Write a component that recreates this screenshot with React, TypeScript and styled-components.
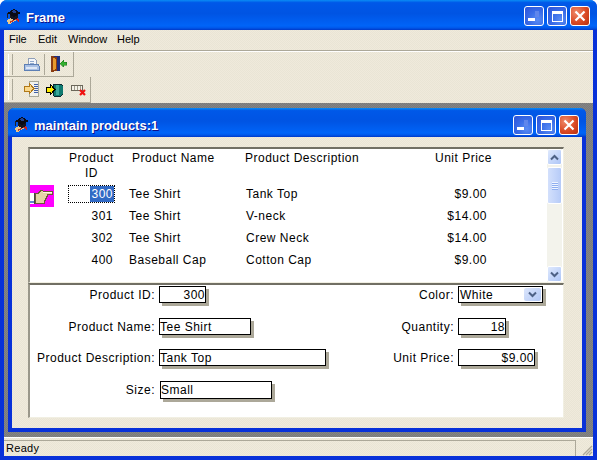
import React from "react";
import styled, { createGlobalStyle } from "styled-components";

const Global = createGlobalStyle`
  html, body { margin: 0; padding: 0; background: #fff; }
  #root { width: 597px; height: 460px; overflow: hidden; }
  * { box-sizing: border-box; }
`;

const TITLE_GRADIENT = "linear-gradient(180deg,#0a8cf5 0,#0058e8 9%,#0054e3 45%,#0064f8 86%,#0058ea 93%,#0038c8 100%)";
const BEIGE_DITHER = "repeating-conic-gradient(#f0eadc 0 25%, #e9e5d5 0 50%) 0 0 / 2px 2px";
const GREY_DITHER = "repeating-conic-gradient(#858585 0 25%, #7a7a7a 0 50%) 0 0 / 2px 2px";

const Frame = styled.div`
  width: 597px;
  height: 460px;
  display: flex;
  flex-direction: column;
  background: #0831d9;
  border-radius: 7px 7px 0 0;
  overflow: hidden;
  font-family: "Liberation Sans", Arial, sans-serif;
  color: #000;
`;

const TitleBar = styled.div<{ $child?: boolean }>`
  flex: none;
  height: ${(p) => (p.$child ? 29 : 30)}px;
  display: flex;
  align-items: center;
  background: ${TITLE_GRADIENT};
  padding: ${(p) => (p.$child ? "4px 7px 0 6px" : "2px 7px 0 6px")};
  gap: 3px;
`;

const TitleText = styled.span`
  flex: 1;
  color: #fff;
  font-size: 13px;
  font-weight: 700;
  margin-top: 2px;
  text-shadow: 1px 1px 0 #0f1089;
  white-space: nowrap;
`;

const Controls = styled.div`
  display: flex;
  gap: 3px;
`;

const WinButton = styled.div<{ $close?: boolean }>`
  width: 20px;
  height: 20px;
  border: 1px solid #fff;
  border-radius: 3px;
  display: flex;
  align-items: center;
  justify-content: center;
  background: ${(p) =>
    p.$close
      ? "radial-gradient(circle at 30% 30%, #ef8a6a 0, #da4a25 55%, #b8300f 100%)"
      : "radial-gradient(circle at 70% 70%, #5a8cf4 0, #3b6ee8 45%, #2a50d8 100%)"};
`;

const Body = styled.div`
  flex: 1;
  margin: 0 4px 4px;
  display: flex;
  flex-direction: column;
  background: ${BEIGE_DITHER};
  min-height: 0;
`;

const MenuBar = styled.div`
  flex: none;
  height: 21px;
  padding-bottom: 2px;
  display: flex;
  align-items: center;
  font-size: 11px;
  border-bottom: 1px solid #aca899;
`;

const MenuItem = styled.span<{ $w: number }>`
  width: ${(p) => p.$w}px;
  padding-left: 5px;
`;

const RuleLight = styled.div`
  flex: none;
  height: 1px;
  background: #fff;
`;

const ToolRow = styled.div<{ $w: number; $h: number }>`
  flex: none;
  width: ${(p) => p.$w}px;
  height: ${(p) => p.$h}px;
  display: flex;
  align-items: center;
  border-right: 1px solid #aca899;
  border-bottom: 1px solid #aca899;
  padding-left: 4px;
`;

const Grip = styled.div`
  flex: none;
  width: 5px;
  height: 21px;
  border-left: 1px solid #fff;
  border-right: 1px solid #aca899;
  margin-right: 10px;
`;

const ToolIcon = styled.div<{ $mr: number }>`
  flex: none;
  width: 17px;
  height: 17px;
  margin-right: ${(p) => p.$mr}px;
  display: flex;
`;

const ToolSep = styled.div`
  flex: none;
  width: 1px;
  height: 21px;
  background: #aca899;
  margin-right: 6px;
`;

const Client = styled.div`
  flex: 1;
  min-height: 0;
  background: ${GREY_DITHER};
  padding: 5px 7px 5px 4px;
  display: flex;
`;

const Child = styled.div`
  flex: 1;
  display: flex;
  flex-direction: column;
  background: #0831d9;
  border-radius: 6px 6px 0 0;
  overflow: hidden;
`;

const ChildBody = styled.div`
  flex: 1;
  margin: 0 4px 4px;
  background: ${BEIGE_DITHER};
  padding: 10px 18px 9px 16px;
  display: flex;
  flex-direction: column;
  min-height: 0;
`;

const Pane = styled.div<{ $h: number }>`
  flex: none;
  height: ${(p) => p.$h}px;
  background: #fff;
  border-style: solid;
  border-width: 2px 1px 1px 2px;
  border-color: #716f64 #f1efe2 #f1efe2 #9a978a;
  display: flex;
  font-size: 12px;
  letter-spacing: 0.5px;
`;

const Grid = styled.div`
  flex: 1;
  display: flex;
  flex-direction: column;
`;

const HeaderRow = styled.div`
  display: grid;
  grid-template-columns: 38px 47px 130px 155px 1fr;
  height: 37px;
  padding-top: 2px;
  line-height: 15px;
`;

const HeadId = styled.div`
  text-align: center;
`;

const HeadCell = styled.div<{ $pl: number }>`
  padding-left: ${(p) => p.$pl}px;
  white-space: nowrap;
`;

const DataRow = styled.div`
  display: grid;
  grid-template-columns: 38px 47px 130px 155px 1fr;
  height: 22px;
  align-items: start;
  line-height: 15px;
`;

const IdCell = styled.div<{ $focus?: boolean }>`
  height: 18px;
  margin-top: -1px;
  padding-right: 1px;
  display: flex;
  align-items: center;
  justify-content: flex-end;
  outline: ${(p) => (p.$focus ? "1px dotted #000" : "none")};
  outline-offset: -1px;
`;

const Selected = styled.span`
  background: #316ac5;
  color: #fff;
  height: 16px;
  line-height: 16px;
  padding: 0 1px;
`;

const Plain = styled.span`
  padding: 0 1px;
`;

const TextCell = styled.div<{ $pl: number }>`
  margin-top: 1px;
  padding-left: ${(p) => p.$pl}px;
  white-space: nowrap;
`;

const PriceCell = styled.div`
  margin-top: 1px;
  width: 87px;
  text-align: right;
`;

const Selector = styled.div<{ $on?: boolean }>`
  width: 24px;
  height: 22px;
  margin-top: -1px;
  background: ${(p) => (p.$on ? "#ff00ff" : "transparent")};
  display: flex;
`;

const Scroll = styled.div`
  flex: none;
  width: 15px;
  margin-right: 1px;
  display: flex;
  flex-direction: column;
  background: #f3f3ec;
`;

const ScrollBtn = styled.div`
  flex: none;
  height: 16px;
  border: 1px solid #fff;
  border-radius: 2px;
  background: linear-gradient(135deg, #dfe9fd, #aec6f7);
  display: flex;
  align-items: center;
  justify-content: center;
`;

const Track = styled.div`
  flex: 1;
  padding-top: 2px;
`;

const Thumb = styled.div`
  height: 37px;
  border: 1px solid #fff;
  border-radius: 2px;
  background: linear-gradient(90deg, #d3e0fc, #b6cbf8);
  display: flex;
  flex-direction: column;
  align-items: center;
  justify-content: center;
  gap: 1px;
`;

const ThumbLine = styled.div`
  width: 6px;
  height: 1px;
  background: #f0f5ff;
  box-shadow: 0 1px 0 #8eaef0;
`;

const FormGrid = styled.div`
  flex: 1;
  display: grid;
  grid-template-columns: 125px 171px 128px 1fr;
  grid-template-rows: 32px 31px 32px 1fr;
  padding-top: 1px;
`;

const Label = styled.div`
  height: 19px;
  line-height: 19px;
  text-align: right;
  white-space: nowrap;
`;

const FieldCell = styled.div<{ $ml?: number }>`
  padding-left: ${(p) => 4 + (p.$ml ?? 0)}px;
`;

const Box = styled.div<{ $w: number; $h?: number; $right?: boolean }>`
  width: ${(p) => p.$w}px;
  height: ${(p) => p.$h ?? 17}px;
  background: #fff;
  border: 1px solid #000;
  box-shadow: 3px 3px 0 #aca899;
  line-height: 15px;
  padding-top: 1px;
  text-align: ${(p) => (p.$right ? "right" : "left")};
  white-space: nowrap;
  overflow: hidden;
`;

const SelectBox = styled(Box)`
  display: flex;
  align-items: center;
  justify-content: space-between;
  padding: 1px 1px 0 1px;
`;

const SelectBtn = styled.div`
  flex: none;
  width: 17px;
  height: 13px;
  margin-top: -1px;
  border-radius: 2px;
  background: linear-gradient(135deg, #dce6fc, #b2c8f5);
  display: flex;
  align-items: center;
  justify-content: center;
`;

const Status = styled.div`
  flex: none;
  height: 19px;
  border-top: 1px solid #fff;
  display: flex;
  font-size: 11px;
  letter-spacing: 0.3px;
`;

const StatusMain = styled.div`
  flex: none;
  width: 572px;
  border-top: 1px solid #aca899;
  border-right: 1px solid #aca899;
  margin-top: 2px;
  padding-left: 2px;
  line-height: 15px;
`;

const StatusGrip = styled.div`
  flex: 1;
  display: flex;
  align-items: flex-end;
  justify-content: flex-end;
`;

const AppIcon = () => (
  <svg width="17" height="17" viewBox="0 0 17 17" shapeRendering="crispEdges">
    <path d="M1 12l8-4 3 3-8 5H2z" fill="#e8c78c" />
    <path d="M3 14l7-4 1 1-7 4z" fill="#c0392b" />
    <path d="M10 10l3 1 0 3-2-1z" fill="#d02020" />
    <path d="M1 5l7-4 7 4-7 4z" fill="#0a0a14" />
    <path d="M4 7v3l4 2 4-2V7l-4 2z" fill="#15151f" />
    <path d="M5 4l3-2 3 2-3 1z" fill="#24408c" />
    <path d="M1 5h1v5H1z" fill="#222" />
  </svg>
);

const MinGlyph = () => (
  <svg width="14" height="14" viewBox="0 0 14 14" shapeRendering="crispEdges">
    <rect x="1" y="9" width="7" height="3" fill="#fff" />
    <rect x="8" y="2" width="4" height="6" fill="#5f86ec" />
  </svg>
);

const MaxGlyph = () => (
  <svg width="14" height="14" viewBox="0 0 14 14" shapeRendering="crispEdges">
    <rect x="2.5" y="2.5" width="10" height="10" fill="none" stroke="#fff" />
    <rect x="2" y="2" width="11" height="3" fill="#fff" />
  </svg>
);

const CloseGlyph = () => (
  <svg width="14" height="14" viewBox="0 0 14 14">
    <path d="M2.5 2.5l9 9M11.5 2.5l-9 9" stroke="#fff" strokeWidth="2.2" fill="none" />
  </svg>
);

const WindowControls = () => (
  <Controls>
    <WinButton><MinGlyph /></WinButton>
    <WinButton><MaxGlyph /></WinButton>
    <WinButton $close><CloseGlyph /></WinButton>
  </Controls>
);

const PrinterIcon = () => (
  <svg width="17" height="17" viewBox="0 0 17 17" shapeRendering="crispEdges">
    <path d="M5 2h6l2 2v5H5z" fill="#f4f6fa" stroke="#8f9fb8" />
    <path d="M7 5h4M7 7h4" stroke="#8fa8cc" />
    <path d="M2 8h13l1 2v4H1v-4z" fill="#a9c0e4" stroke="#5d7fb4" />
    <rect x="3" y="11" width="11" height="2" fill="#dfe8f6" />
  </svg>
);

const DoorIcon = () => (
  <svg width="17" height="17" viewBox="0 0 17 17" shapeRendering="crispEdges">
    <rect x="1" y="0" width="8" height="15" fill="#1f2f80" />
    <path d="M0 0l6 1v14l-6 1z" fill="#8a3c12" />
    <path d="M2 2l3 1v10l-3 1z" fill="#e89a2c" />
    <path d="M9 7.500l3.500-3.500v2h3v3h-3v2z" fill="#34b030" stroke="#1c701c" strokeWidth="0.5" />
  </svg>
);

const ArrowDocIcon = () => (
  <svg width="17" height="17" viewBox="0 0 17 17" shapeRendering="crispEdges">
    <rect x="6.500" y="0.500" width="9" height="15" fill="#f2f2ec" stroke="#a8a898" />
    <path d="M11 3h4M11 5h4M11 7h4M11 9h4M11 11h4" stroke="#4060a8" />
    <path d="M1 5h5V2l5 5.500-5 5.500v-3H1z" fill="#fbd98a" stroke="#b07818" />
  </svg>
);

const ArrowCylIcon = () => (
  <svg width="17" height="17" viewBox="0 0 17 17" shapeRendering="crispEdges">
    <path d="M8 3h7l2 2v8l-2 2H8l-1-2V5z" fill="#0f7a70" stroke="#0a2a30" />
    <rect x="10" y="4" width="3" height="10" fill="#3aa89a" />
    <path d="M0 6h4V3l5 5.500L4 14v-3H0z" fill="#ffee00" stroke="#000" />
  </svg>
);

const BatteryIcon = () => (
  <svg width="17" height="17" viewBox="0 0 17 17" shapeRendering="crispEdges">
    <rect x="0.500" y="4.500" width="11" height="5" fill="#f4f2e8" stroke="#6b675a" />
    <path d="M3 5v4M6 5v4M9 5v4" stroke="#a09c8c" />
    <path d="M9 9l5 5M14 9l-5 5" stroke="#f01010" strokeWidth="2.200" shapeRendering="auto" />
  </svg>
);

const HandIcon = () => (
  <svg width="24" height="22" viewBox="0 0 24 22" shapeRendering="crispEdges">
    <rect x="0" y="8" width="4" height="11" fill="#fff" />
    <rect x="0" y="16" width="4" height="2" fill="#5f8ad0" />
    <rect x="4" y="8" width="1" height="11" fill="#444" />
    <path d="M5 8h3l2-3h3v1h10v4h-5v2h-1v2h-1v2h-1v3H5z" fill="#6b5a35" />
    <path d="M6 9h3l2-3h2v1h9v2H17v2h-1v2h-1v2h-1v3H6z" fill="#e4d3a6" />
    <path d="M13 7h9v1h-9z" fill="#fff8e2" />
  </svg>
);

const Chevron = ({ up, color }: { up?: boolean; color: string }) => (
  <svg width="9" height="7" viewBox="0 0 9 7">
    <path d={up ? "M1 5.500l3.500-3.500 3.500 3.500" : "M1 1.500l3.500 3.500 3.500-3.500"} fill="none" stroke={color} strokeWidth="2" />
  </svg>
);

const GripGlyph = () => (
  <svg width="12" height="12" viewBox="0 0 12 12">
    <path d="M11 2L2 11M11 5l-6 6M11 8l-3 3" stroke="#aca899" strokeWidth="1.300" />
  </svg>
);

const rows = [
  { id: "300", name: "Tee Shirt", desc: "Tank Top", price: "$9.00", on: true },
  { id: "301", name: "Tee Shirt", desc: "V-neck", price: "$14.00" },
  { id: "302", name: "Tee Shirt", desc: "Crew Neck", price: "$14.00" },
  { id: "400", name: "Baseball Cap", desc: "Cotton Cap", price: "$9.00" },
];

export default function App() {
  return (
    <>
      <Global />
      <Frame>
        <TitleBar>
          <AppIcon />
          <TitleText>Frame</TitleText>
          <WindowControls />
        </TitleBar>
        <Body>
          <MenuBar>
            <MenuItem $w={29}>File</MenuItem>
            <MenuItem $w={30}>Edit</MenuItem>
            <MenuItem $w={49}>Window</MenuItem>
            <MenuItem $w={30}>Help</MenuItem>
          </MenuBar>
          <RuleLight />
          <ToolRow $w={70} $h={25}>
            <Grip />
            <ToolIcon $mr={4}><PrinterIcon /></ToolIcon>
            <ToolSep />
            <ToolIcon $mr={0}><DoorIcon /></ToolIcon>
          </ToolRow>
          <ToolRow $w={87} $h={26}>
            <Grip />
            <ToolIcon $mr={6}><ArrowDocIcon /></ToolIcon>
            <ToolIcon $mr={8}><ArrowCylIcon /></ToolIcon>
            <ToolIcon $mr={0}><BatteryIcon /></ToolIcon>
          </ToolRow>
          <Client>
            <Child>
              <TitleBar $child>
                <AppIcon />
                <TitleText>maintain products:1</TitleText>
                <WindowControls />
              </TitleBar>
              <ChildBody>
                <Pane $h={136}>
                  <Grid>
                    <HeaderRow>
                      <div />
                      <HeadId>Product<br />ID</HeadId>
                      <HeadCell $pl={17}>Product Name</HeadCell>
                      <HeadCell $pl={0}>Product Description</HeadCell>
                      <HeadCell $pl={35}>Unit Price</HeadCell>
                    </HeaderRow>
                    {rows.map((r) => (
                      <DataRow key={r.id}>
                        <Selector $on={r.on}>{r.on && <HandIcon />}</Selector>
                        <IdCell $focus={r.on}>
                          {r.on ? <Selected>{r.id}</Selected> : <Plain>{r.id}</Plain>}
                        </IdCell>
                        <TextCell $pl={14}>{r.name}</TextCell>
                        <TextCell $pl={1}>{r.desc}</TextCell>
                        <PriceCell>{r.price}</PriceCell>
                      </DataRow>
                    ))}
                  </Grid>
                  <Scroll>
                    <ScrollBtn><Chevron up color="#4d6185" /></ScrollBtn>
                    <Track>
                      <Thumb>
                        <ThumbLine />
                        <ThumbLine />
                        <ThumbLine />
                        <ThumbLine />
                      </Thumb>
                    </Track>
                    <ScrollBtn><Chevron color="#4d6185" /></ScrollBtn>
                  </Scroll>
                </Pane>
                <Pane $h={135}>
                  <FormGrid>
                    <Label>Product ID:</Label>
                    <FieldCell><Box $w={47} $right>300</Box></FieldCell>
                    <Label>Color:</Label>
                    <FieldCell>
                      <SelectBox $w={85}>White<SelectBtn><Chevron color="#4d6185" /></SelectBtn></SelectBox>
                    </FieldCell>
                    <Label>Product Name:</Label>
                    <FieldCell><Box $w={92}>Tee Shirt</Box></FieldCell>
                    <Label>Quantity:</Label>
                    <FieldCell><Box $w={48} $right>18</Box></FieldCell>
                    <Label>Product Description:</Label>
                    <FieldCell><Box $w={167}>Tank Top</Box></FieldCell>
                    <Label>Unit Price:</Label>
                    <FieldCell><Box $w={77} $right>$9.00</Box></FieldCell>
                    <Label>Size:</Label>
                    <FieldCell $ml={1}><Box $w={112} $h={18}>Small</Box></FieldCell>
                  </FormGrid>
                </Pane>
              </ChildBody>
            </Child>
          </Client>
          <Status>
            <StatusMain>Ready</StatusMain>
            <StatusGrip><GripGlyph /></StatusGrip>
          </Status>
        </Body>
      </Frame>
    </>
  );
}
